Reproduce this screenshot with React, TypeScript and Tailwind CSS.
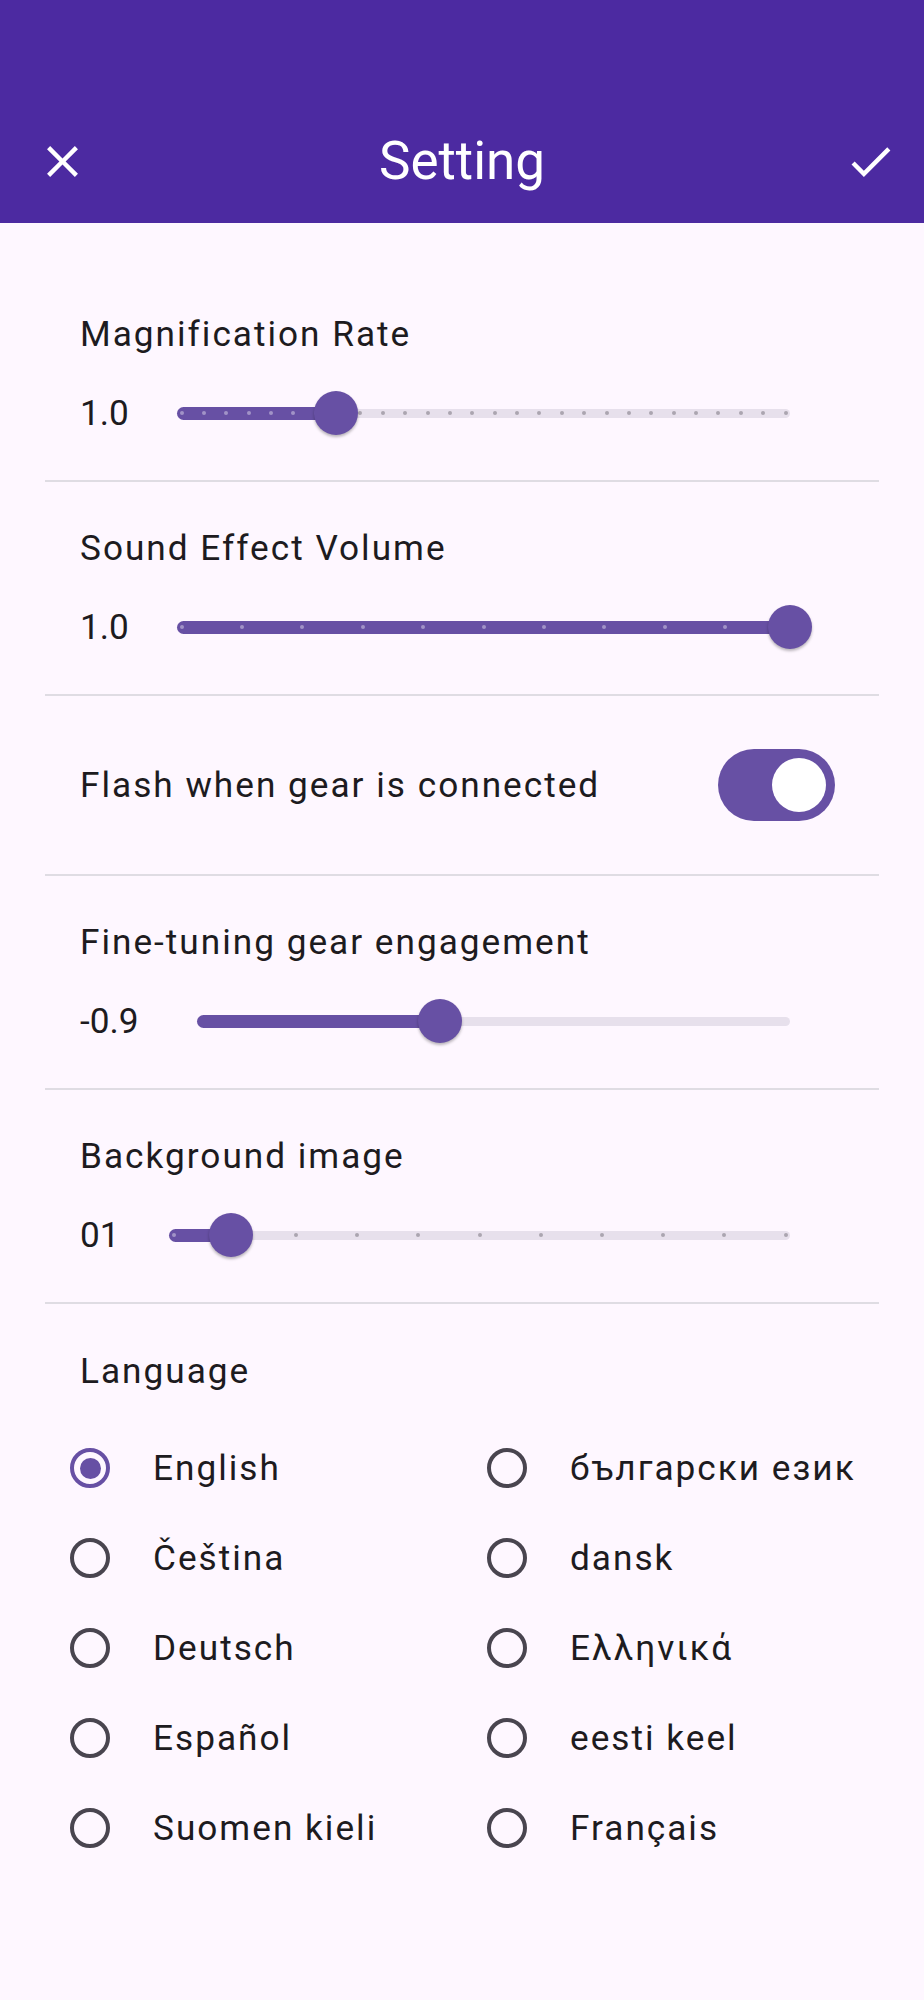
import React from "react"

type SliderProps = { value: string; frac: number; divisions?: number; labelW: string }

function Slider({ value, frac, divisions, labelW }: SliderProps) {
  const ticks = divisions ? Array.from({ length: divisions + 1 }, (_, i) => i / divisions) : []
  return (
    <div className="flex h-[44px] items-center">
      <span className={labelW + " tracking-normal"}>{value}</span>
      <div className="flex-1 px-[44px]">
        <div className="relative h-[44px]">
          <div className="absolute left-0 right-0 top-[17.5px] h-[9px] rounded-full bg-[#e7e0ec]" />
          <div
            className="absolute left-0 top-[15.5px] h-[13px] rounded-l-full bg-[#6750a4]"
            style={{ width: `${frac * 100}%` }}
          />
          {ticks.map((t, i) => (
            <span
              key={i}
              className={
                t <= frac
                  ? "absolute top-[20px] size-[4px] -translate-x-1/2 rounded-full bg-[#a193c7]"
                  : "absolute top-[20px] size-[4px] -translate-x-1/2 rounded-full bg-[#aba5b0]"
              }
              style={{ left: `calc(4.5px + ${t} * (100% - 9px))` }}
            />
          ))}
          <div
            className="absolute top-0 size-[44px] -translate-x-1/2 rounded-full bg-[#6750a4] shadow-[0_2px_3px_rgba(0,0,0,0.28)]"
            style={{ left: `${frac * 100}%` }}
          />
        </div>
      </div>
    </div>
  )
}

function SliderSection({ label, ...rest }: SliderProps & { label: string }) {
  return (
    <section className="mx-[45px] border-b-2 border-[#dfdce3] pb-[45px] pl-[35px] pr-[45px] pt-[44px]">
      <div className="h-[44px] leading-[44px]">{label}</div>
      <div className="mt-[35px]">
        <Slider {...rest} />
      </div>
    </section>
  )
}

function Radio({ label, checked }: { label: string; checked?: boolean }) {
  return (
    <div className="flex h-[90px] items-center pl-[25px]">
      <span
        className={
          checked
            ? "flex size-[40px] items-center justify-center rounded-full border-[4.5px] border-[#6750a4]"
            : "flex size-[40px] items-center justify-center rounded-full border-[4.5px] border-[#49454f]"
        }
      >
        {checked ? <span className="size-[21px] rounded-full bg-[#6750a4]" /> : null}
      </span>
      <span className="ml-[43px]">{label}</span>
    </div>
  )
}

const languages: [string, string][] = [
  ["English", "български език"],
  ["Čeština", "dansk"],
  ["Deutsch", "Ελληνικά"],
  ["Español", "eesti keel"],
  ["Suomen kieli", "Français"],
]

export default function App() {
  return (
    <div
      className="min-h-screen bg-[#fef7ff] text-[35.2px] tracking-[2px] text-[#1d1b20]"
      style={{ fontFamily: "Roboto, 'Noto Sans', sans-serif" }}
    >
      <header className="h-[223px] bg-[#4c2aa1] pt-[100px] text-white">
        <div className="grid h-[123px] grid-cols-[1fr_auto_1fr] items-center">
          <button className="ml-[36px] justify-self-start">
            <svg viewBox="0 0 24 24" className="size-[53px]" fill="currentColor">
              <path d="M19 6.41L17.59 5 12 10.59 6.41 5 5 6.41 10.59 12 5 17.59 6.41 19 12 13.41 17.59 19 19 17.59 13.41 12z" />
            </svg>
          </button>
          <h1 className="text-[53px] tracking-normal">Setting</h1>
          <button className="mr-[27px] justify-self-end">
            <svg viewBox="0 0 24 24" className="size-[53px]" fill="currentColor">
              <path d="M9 16.17L4.83 12l-1.42 1.41L9 19 21 7l-1.41-1.41z" />
            </svg>
          </button>
        </div>
      </header>

      <main className="pt-[45px]">
        <SliderSection label="Magnification Rate" value="1.0" labelW="w-[53px]" frac={7 / 27} divisions={27} />
        <SliderSection label="Sound Effect Volume" value="1.0" labelW="w-[53px]" frac={1} divisions={10} />

        <section className="mx-[45px] flex items-center justify-between border-b-2 border-[#dfdce3] py-[53px] pl-[35px] pr-[44px]">
          <span>Flash when gear is connected</span>
          <div className="flex h-[72px] w-[117px] items-center justify-end rounded-full bg-[#6750a4] pr-[9px]">
            <div className="size-[54px] rounded-full bg-white" />
          </div>
        </section>

        <SliderSection label="Fine-tuning gear engagement" value="-0.9" labelW="w-[73px]" frac={0.41} />
        <SliderSection label="Background image" value="01" labelW="w-[45px]" frac={0.1} divisions={10} />

        <section className="mx-[45px] pt-[45px]">
          <div className="h-[44px] pl-[35px] leading-[44px]">Language</div>
          <div className="mt-[30px] grid grid-cols-2">
            {languages.map(([a, b]) => (
              <React.Fragment key={a}>
                <Radio label={a} checked={a === "English"} />
                <Radio label={b} />
              </React.Fragment>
            ))}
          </div>
        </section>
      </main>
    </div>
  )
}
